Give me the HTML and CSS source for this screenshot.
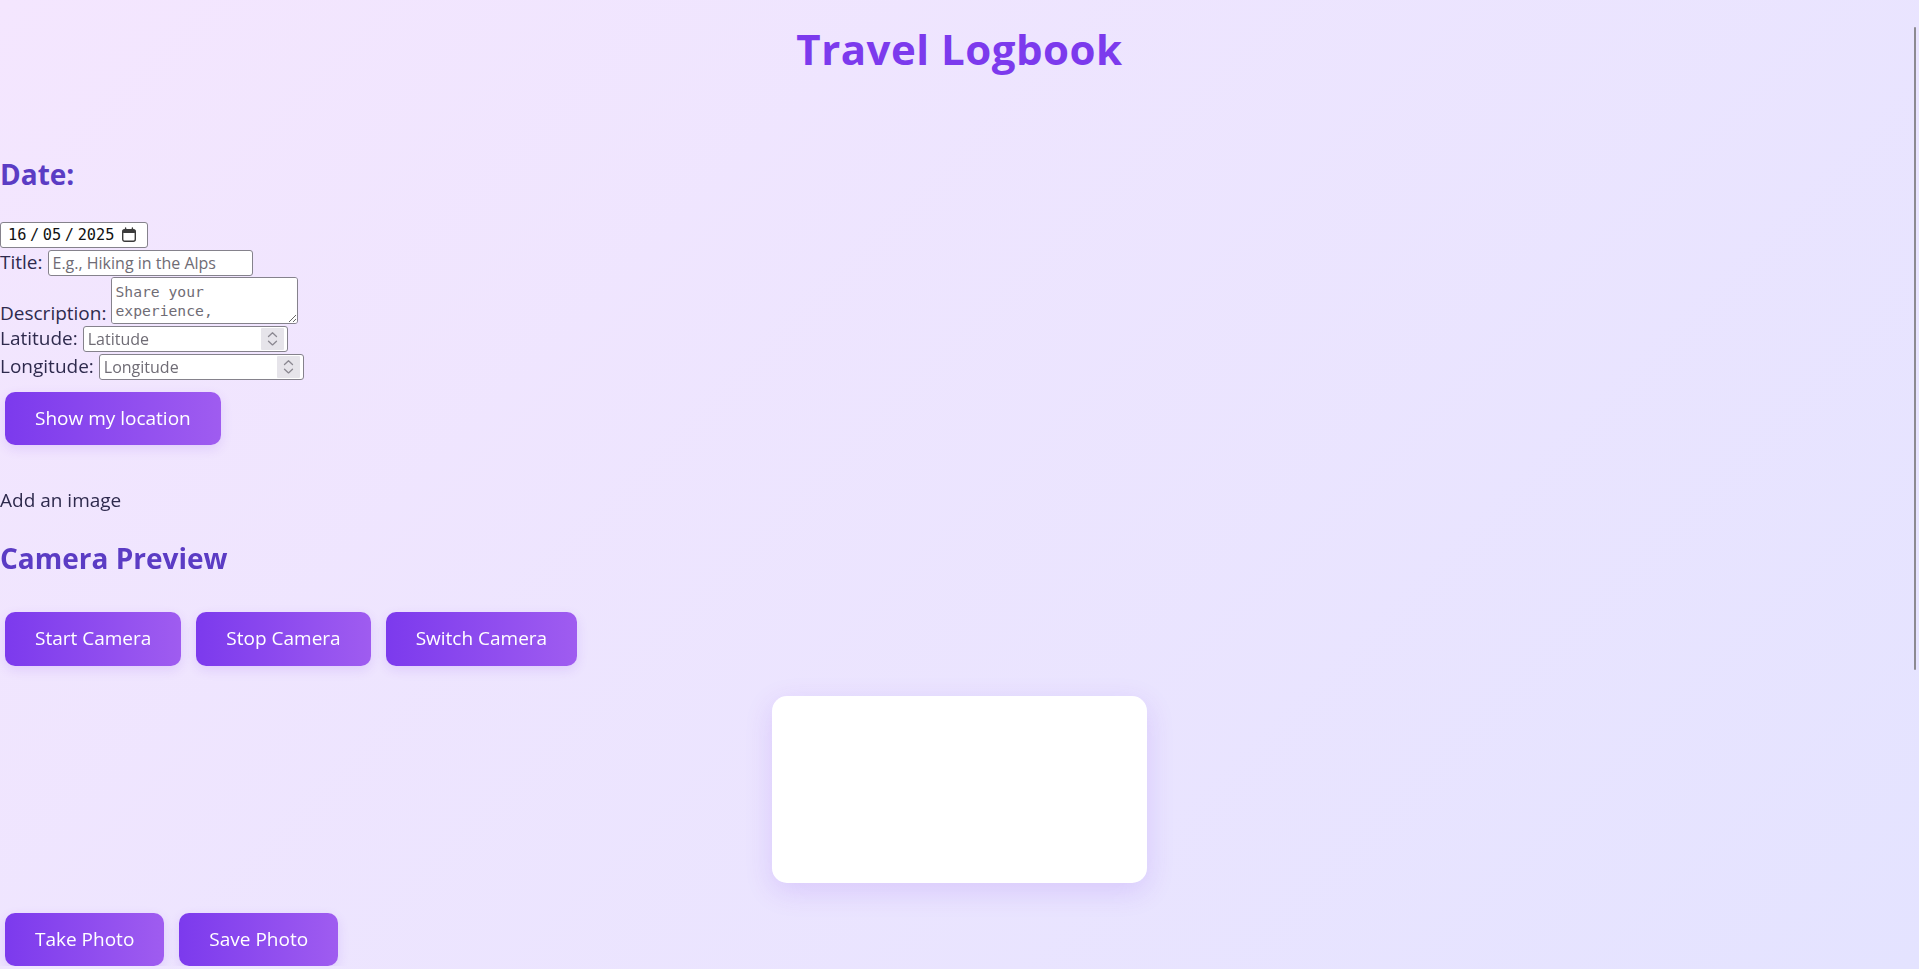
FILE: index.html
```html
<!DOCTYPE html>
<html lang="en">
<head>
<meta charset="utf-8">
<title>Travel Logbook</title>
<link rel="stylesheet" href="styles.css">
</head>
<body>
<h1 class="app-title">Travel Logbook</h1>
<main class="entry-form">
  <h2 class="section-heading date-heading">Date:</h2>
  <div class="field-row date-row">
    <div class="date-box" role="group" aria-label="Date">
      <span class="date-part">16</span><span class="date-sep">/</span><span class="date-part">05</span><span class="date-sep">/</span><span class="date-part">2025</span>
      <svg class="cal-icon" viewBox="0 0 16 16" width="16" height="16" aria-hidden="true">
        <rect x="1.7" y="2.7" width="12.6" height="11.6" rx="2" fill="none" stroke="#3b3b3b" stroke-width="1.4"/>
        <rect x="1.7" y="2.7" width="12.6" height="3.3" rx="1" fill="#3b3b3b"/>
        <path d="M4.6 1v3M11.4 1v3" stroke="#3b3b3b" stroke-width="1.4" stroke-linecap="round"/>
      </svg>
    </div>
  </div>
  <div class="field-row">
    <label class="field-label" for="title">Title:</label>
    <input id="title" class="text-input" type="text" placeholder="E.g., Hiking in the Alps">
  </div>
  <div class="field-row desc-row">
    <label class="field-label desc-label" for="desc">Description:</label>
    <textarea id="desc" class="desc-input" placeholder="Share your experience,"></textarea>
  </div>
  <div class="field-row">
    <label class="field-label" for="lat">Latitude:</label>
    <div class="number-box">
      <input id="lat" class="number-input" type="text" inputmode="decimal" placeholder="Latitude">
      <span class="spinner" aria-hidden="true">
        <svg viewBox="0 0 23 22" width="23" height="22"><path d="M7.5 8.5L11.5 4.8L15.5 8.5M7.5 13.2L11.5 16.9L15.5 13.2" fill="none" stroke="#8b8891" stroke-width="1.3" stroke-linecap="round" stroke-linejoin="round"/></svg>
      </span>
    </div>
  </div>
  <div class="field-row">
    <label class="field-label" for="lon">Longitude:</label>
    <div class="number-box">
      <input id="lon" class="number-input" type="text" inputmode="decimal" placeholder="Longitude">
      <span class="spinner" aria-hidden="true">
        <svg viewBox="0 0 23 22" width="23" height="22"><path d="M7.5 8.5L11.5 4.8L15.5 8.5M7.5 13.2L11.5 16.9L15.5 13.2" fill="none" stroke="#8b8891" stroke-width="1.3" stroke-linecap="round" stroke-linejoin="round"/></svg>
      </span>
    </div>
  </div>
  <div class="button-row location-row">
    <button class="action-btn" type="button">Show my location</button>
  </div>
  <p class="add-image">Add an image</p>
  <h2 class="section-heading camera-heading">Camera Preview</h2>
  <div class="button-row camera-row">
    <button class="action-btn" type="button">Start Camera</button>
    <button class="action-btn" type="button">Stop Camera</button>
    <button class="action-btn" type="button">Switch Camera</button>
  </div>
  <div class="preview-card"></div>
  <div class="button-row photo-row">
    <button class="action-btn" type="button">Take Photo</button>
    <button class="action-btn" type="button">Save Photo</button>
  </div>
</main>
<div class="scroll-thumb" aria-hidden="true"></div>
</body>
</html>
```
FILE: styles.css
```css
* {
  box-sizing: border-box;
}

html {
  min-height: 100%;
  background: linear-gradient(135deg, #f4e6fe 0%, #e4e3ff 100%);
  scrollbar-width: none;
}

body {
  margin: 0;
  font-family: "Open Sans", "Noto Sans", sans-serif;
  font-size: 19px;
  color: #2e2a4d;
}

.app-title {
  margin: 0;
  padding-top: 24px;
  text-align: center;
  font-size: 42px;
  line-height: 50px;
  font-weight: 700;
  letter-spacing: 0.5px;
  color: #7c3aed;
}

.section-heading {
  margin: 0;
  font-size: 28px;
  line-height: 36px;
  font-weight: 700;
  color: #5b3cc4;
}

.date-heading {
  margin-top: 82px;
}

.field-row {
  display: flex;
  align-items: baseline;
  margin-top: 2px;
}

.date-row {
  margin-top: 30px;
}

.field-label {
  line-height: 24px;
  margin-right: 5px;
}

.date-box {
  display: flex;
  align-items: center;
  width: 148px;
  height: 26px;
  padding: 0 0 0 7px;
  background: #fff;
  border: 1px solid #85828c;
  border-radius: 3px;
  font-family: "DejaVu Sans Mono", "Liberation Mono", monospace;
  font-size: 15.3px;
  color: #111;
}

.date-sep {
  padding: 0 3.6px;
}

.cal-icon {
  margin-left: 6px;
  flex: none;
}

.text-input {
  width: 205px;
  height: 26px;
  margin: 0;
  padding: 0 4px;
  border: 1px solid #85828c;
  border-radius: 3px;
  background: #fff;
  font-family: "Open Sans", "Noto Sans", sans-serif;
  font-size: 16px;
  color: #222;
}

.text-input::placeholder,
.number-input::placeholder {
  color: #6f6c75;
}

.desc-row {
  align-items: flex-end;
  margin-top: 1px;
}

.desc-label {
  margin-bottom: -1px;
}

.desc-input {
  width: 187px;
  height: 47px;
  margin: 0;
  padding: 4px 3px;
  border: 1px solid #85828c;
  border-radius: 3px;
  background: #fff;
  font-family: "DejaVu Sans Mono", "Liberation Mono", monospace;
  font-size: 14.7px;
  line-height: 19px;
  color: #222;
}

.desc-input::placeholder {
  color: #6f6c75;
}

.number-box {
  display: flex;
  align-items: center;
  width: 205px;
  height: 26px;
  padding: 0 3px 0 0;
  border: 1px solid #85828c;
  border-radius: 3px;
  background: #fff;
}

.number-input {
  flex: 1;
  min-width: 0;
  height: 24px;
  margin: 0;
  padding: 0 4px;
  border: 0;
  outline: none;
  background: transparent;
  font-family: "Open Sans", "Noto Sans", sans-serif;
  font-size: 16px;
  color: #222;
}

.spinner {
  display: flex;
  width: 23px;
  height: 22px;
  background: #e6e4ea;
  border-radius: 1px;
}

.button-row {
  display: flex;
  gap: 15px;
  padding-left: 5px;
}

.location-row {
  margin-top: 12px;
}

.camera-row {
  margin-top: 36px;
}

.photo-row {
  margin-top: 30px;
}

.action-btn {
  margin: 0;
  padding: 15px 30px;
  border: 0;
  border-radius: 10px;
  background: linear-gradient(90deg, #7c3aed 0%, #9f5cf0 100%);
  box-shadow: 0 4px 12px rgba(124, 58, 237, 0.14);
  font-family: "Open Sans", "Noto Sans", sans-serif;
  font-size: 19px;
  line-height: 23.4px;
  color: #fff;
  cursor: pointer;
}

.add-image {
  margin: 43px 0 0;
  line-height: 24px;
}

.camera-heading {
  margin-top: 28px;
}

.preview-card {
  width: 375px;
  height: 187px;
  margin: 30px auto 0;
  background: #fff;
  border-radius: 15px;
  box-shadow: 0 8px 28px rgba(124, 58, 237, 0.16);
}

.scroll-thumb {
  position: fixed;
  top: 27px;
  right: 3px;
  width: 2px;
  height: 643px;
  background: #8c8a91;
  border-radius: 1px;
}
```
